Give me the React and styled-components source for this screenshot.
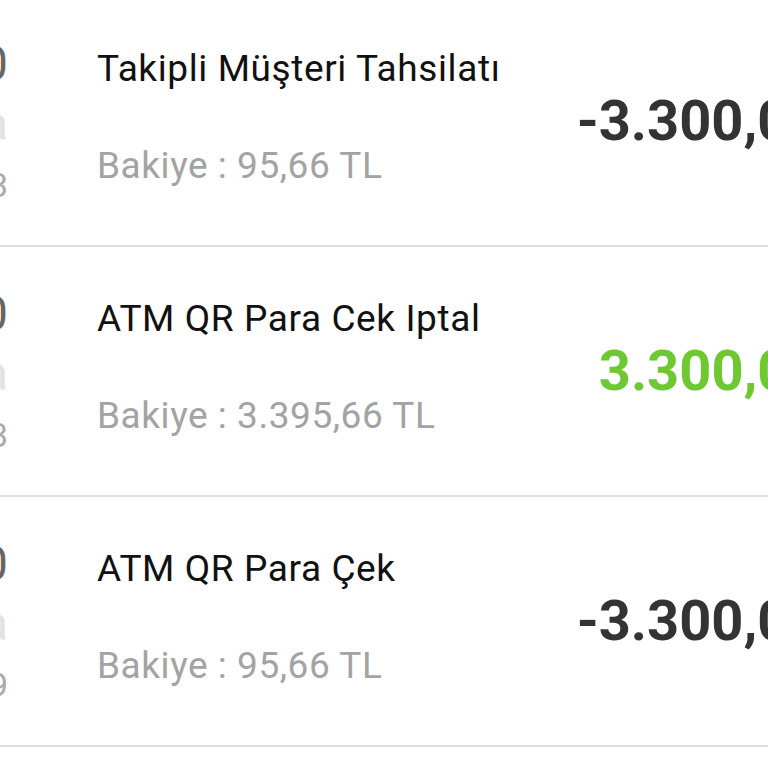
import React from 'react';
import styled, { createGlobalStyle } from 'styled-components';

const GlobalStyle = createGlobalStyle`
  html, body {
    margin: 0;
    padding: 0;
    background: #ffffff;
    overflow: hidden;
  }
  body {
    font-family: Roboto, "Liberation Sans", Arial, sans-serif;
  }
`;

const List = styled.main`
  width: 1000px;
  margin-left: -92px;
  margin-top: -3px;
`;

const Row = styled.div`
  display: grid;
  grid-template-columns: 100px minmax(0, 1fr) auto;
  column-gap: 89px;
  height: 248px;
  border-bottom: 2px solid #dedede;
  align-items: center;
`;

const DateCol = styled.div`
  display: flex;
  flex-direction: column;
  align-items: flex-end;
  text-align: right;
  line-height: 1;
`;

const Day = styled.span`
  font-size: 48px;
  color: #666;
`;

const Month = styled.span`
  margin-top: 12px;
  font-size: 48px;
  color: #e2e2e2;
`;

const Year = styled.span`
  margin-top: 20px;
  font-size: 34px;
  color: #ababab;
`;

const Info = styled.div`
  display: flex;
  flex-direction: column;
  gap: 53px;
  padding-bottom: 8px;
`;

const Title = styled.div`
  font-size: 37px;
  letter-spacing: 0.6px;
  color: #111;
  line-height: 44px;
  white-space: nowrap;
`;

const Balance = styled.div`
  font-size: 37px;
  letter-spacing: 0.55px;
  color: #a3a3a3;
  line-height: 44px;
  white-space: nowrap;
`;

const Amount = styled.div`
  font-size: 56px;
  font-weight: 700;
  color: ${p => (p.$positive ? '#6dc832' : '#333333')};
  white-space: nowrap;
  padding-right: 9px;
`;

const items = [
  { day: '30', month: 'Ara', year: '2023', title: 'Takipli Müşteri Tahsilatı', balance: '95,66 TL', amount: '-3.300,00 TL', positive: false },
  { day: '30', month: 'Ara', year: '2023', title: 'ATM QR Para Cek Iptal', balance: '3.395,66 TL', amount: '3.300,00 TL', positive: true },
  { day: '30', month: 'Ara', year: '2019', title: 'ATM QR Para Çek', balance: '95,66 TL', amount: '-3.300,00 TL', positive: false },
];

export default function App() {
  return (
    <>
      <GlobalStyle />
      <List>
        {items.map((it, i) => (
          <Row key={i}>
            <DateCol>
              <Day>{it.day}</Day>
              <Month>{it.month}</Month>
              <Year>{it.year}</Year>
            </DateCol>
            <Info>
              <Title>{it.title}</Title>
              <Balance>Bakiye : {it.balance}</Balance>
            </Info>
            <Amount $positive={it.positive}>{it.amount}</Amount>
          </Row>
        ))}
      </List>
    </>
  );
}
